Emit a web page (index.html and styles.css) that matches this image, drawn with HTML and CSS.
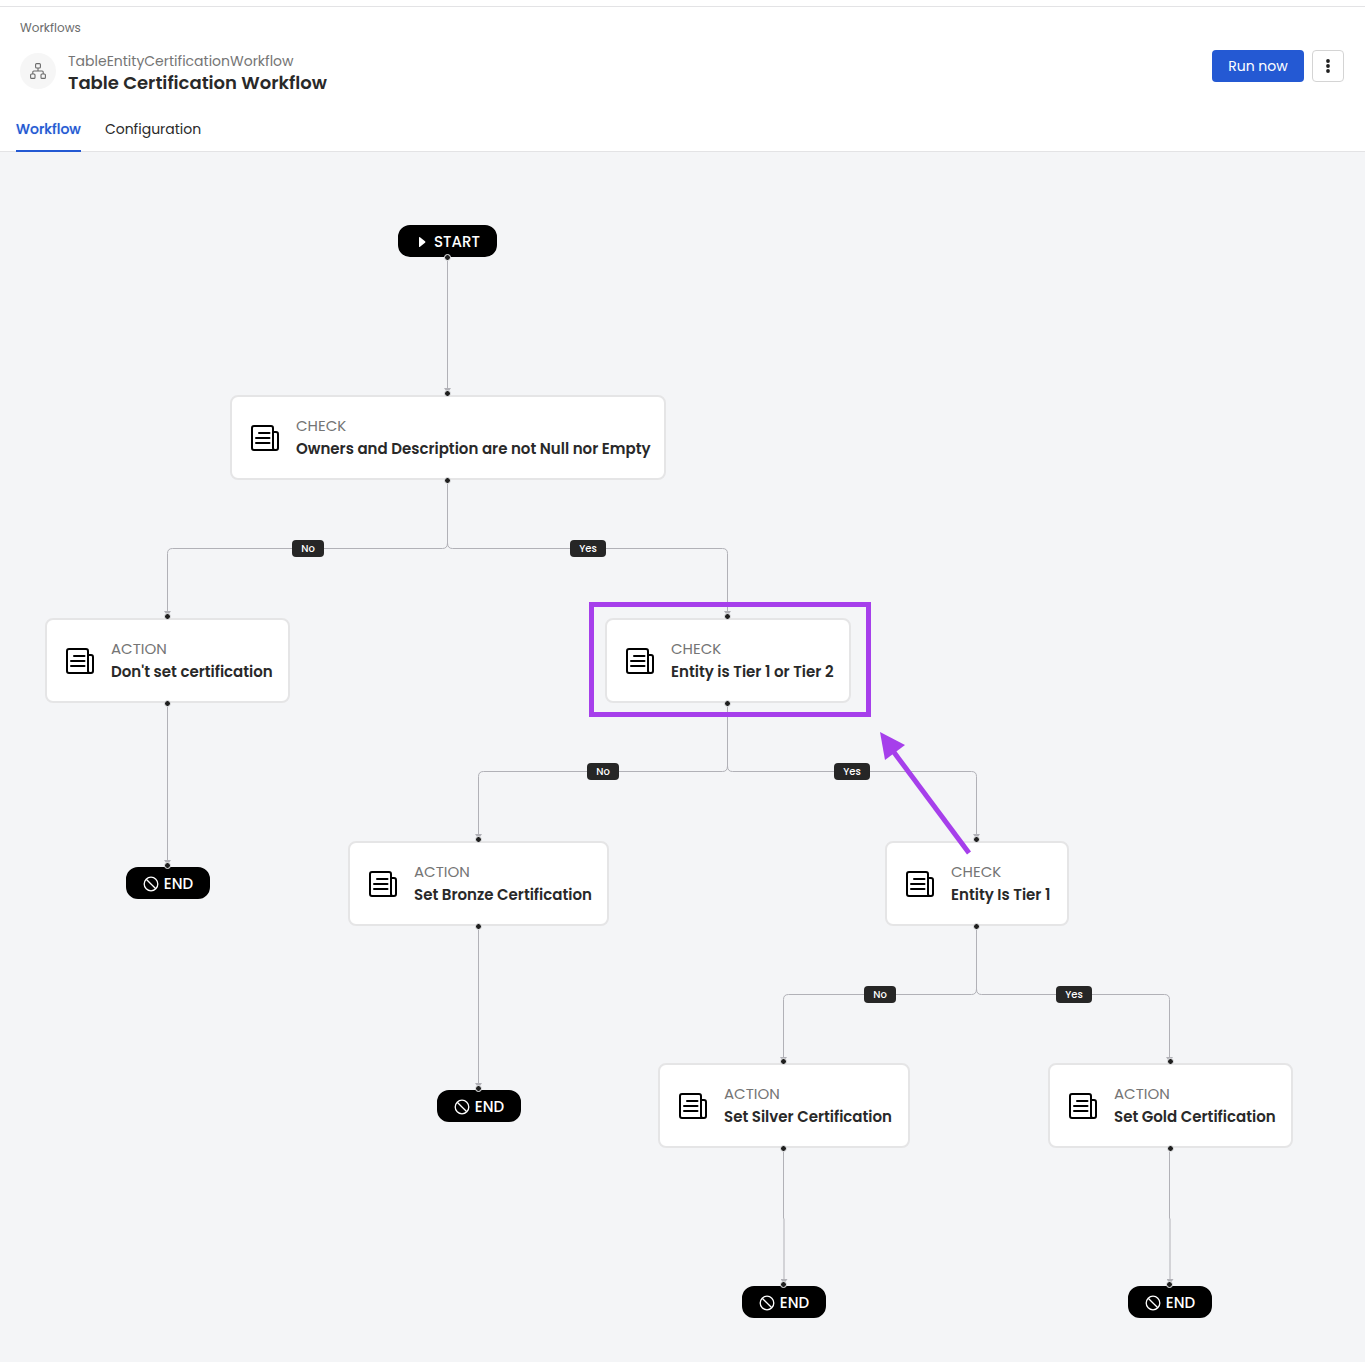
FILE: index.html
```html
<!DOCTYPE html>
<html lang="en">
<head>
<meta charset="utf-8">
<meta name="viewport" content="width=device-width, initial-scale=1">
<title>Table Certification Workflow</title>
<link rel="stylesheet" href="styles.css">
</head>
<body>
<svg class="defs" aria-hidden="true">
  <symbol id="doc" viewBox="0 0 28 26">
    <g fill="none" stroke="#000" stroke-width="2" stroke-linecap="round" stroke-linejoin="round">
      <path d="M25 25H3a2 2 0 0 1-2-2V3a2 2 0 0 1 2-2h17a2 2 0 0 1 2 2v20a2 2 0 0 0 2 2h1a2 2 0 0 0 2-2V9a2 2 0 0 0-2-2h-3"/>
      <path d="M8 8h10.500M5 13h13.500M5 18h13.500"/>
    </g>
  </symbol>
  <symbol id="stop" viewBox="0 0 16 16">
    <g fill="none" stroke="#fff" stroke-width="1.300"><circle cx="8" cy="8" r="6.800"/><path d="M3.200 3.200l9.600 9.600"/></g>
  </symbol>
</svg>
<header class="header">
  <nav class="crumbs" aria-label="Breadcrumb"><a href="#">Workflows</a></nav>
  <div class="heading">
    <span class="avatar">
      <svg width="16" height="16" viewBox="0 0 16 16" fill="none" stroke="#6b6b6b" stroke-width="1.100" aria-hidden="true">
        <rect x="5.600" y=".6" width="4.800" height="4.400" rx="1"/><rect x=".6" y="11" width="4.400" height="4.400" rx="1"/><rect x="11" y="11" width="4.400" height="4.400" rx="1"/><path d="M8 5v3M2.800 11V9a1 1 0 0 1 1-1h8.400a1 1 0 0 1 1 1v2"/>
      </svg>
    </span>
    <div class="names">
      <p class="entity">TableEntityCertificationWorkflow</p>
      <h1 class="title">Table Certification Workflow</h1>
    </div>
    <div class="actions">
      <button class="run" type="button">Run now</button>
      <button class="more" type="button" aria-label="More actions">
        <svg width="4" height="14" viewBox="0 0 4 14" fill="#1f1f1f"><circle cx="2" cy="2" r="1.900"/><circle cx="2" cy="7" r="1.900"/><circle cx="2" cy="12" r="1.900"/></svg>
      </button>
    </div>
  </div>
  <div class="tabs" role="tablist">
    <button class="tab tab-active" type="button" role="tab" aria-selected="true">Workflow</button>
    <button class="tab" type="button" role="tab" aria-selected="false">Configuration</button>
  </div>
</header>
<main class="canvas">
  <svg class="layer edges" aria-hidden="true">
    <defs><marker id="arrow" viewBox="0 0 7 5" markerWidth="7" markerHeight="5" refX="3.500" refY="3" markerUnits="userSpaceOnUse"><path d="M0 0h7L3.500 5z" fill="#b1b1b7"/></marker></defs>
    <g fill="none" stroke="#b1b1b7" marker-end="url(#arrow)">
      <path d="M447.500 106V239"/>
      <path d="M447.500 329V391q0 5.500-5 5.500H172.500q-5 0-5 5V462"/>
      <path d="M447.500 329V391q0 5.500 5 5.500H722.500q5 0 5 5V462"/>
      <path d="M167.500 552V711"/>
      <path d="M727.500 552V614q0 5.500-5 5.500H483.500q-5 0-5 5V685"/>
      <path d="M727.500 552V614q0 5.500 5 5.500H971.500q5 0 5 5V685"/>
      <path d="M478.500 775V934"/>
      <path d="M976.500 775V837q0 5.500-5 5.500H788.500q-5 0-5 5V908"/>
      <path d="M976.500 775V837q0 5.500 5 5.500H1164.500q5 0 5 5V908"/>
      <path d="M783.500 998V1066l.500 1V1130"/>
      <path d="M1169.500 998V1066l.500 1V1130"/>
    </g>
  </svg>

  <div class="pill start"><svg width="8" height="12" viewBox="0 0 8 12" fill="#fff" aria-hidden="true"><path d="M1 1.500Q1 .5 2 1.200L7 5.200Q8 6 7 6.800L2 10.800Q1 11.500 1 10.500z"/></svg>START</div>

  <article class="card owners"><svg class="doc"><use href="#doc"/></svg><div class="label"><p class="kind">CHECK</p><h2 class="name">Owners and Description are not Null nor Empty</h2></div></article>
  <article class="card unset"><svg class="doc"><use href="#doc"/></svg><div class="label"><p class="kind">ACTION</p><h2 class="name">Don't set certification</h2></div></article>
  <article class="card tier-any"><svg class="doc"><use href="#doc"/></svg><div class="label"><p class="kind">CHECK</p><h2 class="name">Entity is Tier 1 or Tier 2</h2></div></article>
  <article class="card bronze"><svg class="doc"><use href="#doc"/></svg><div class="label"><p class="kind">ACTION</p><h2 class="name">Set Bronze Certification</h2></div></article>
  <article class="card tier-one"><svg class="doc"><use href="#doc"/></svg><div class="label"><p class="kind">CHECK</p><h2 class="name">Entity Is Tier 1</h2></div></article>
  <article class="card silver"><svg class="doc"><use href="#doc"/></svg><div class="label"><p class="kind">ACTION</p><h2 class="name">Set Silver Certification</h2></div></article>
  <article class="card gold"><svg class="doc"><use href="#doc"/></svg><div class="label"><p class="kind">ACTION</p><h2 class="name">Set Gold Certification</h2></div></article>

  <div class="pill end end-unset"><svg class="stop"><use href="#stop"/></svg>END</div>
  <div class="pill end end-bronze"><svg class="stop"><use href="#stop"/></svg>END</div>
  <div class="pill end end-silver"><svg class="stop"><use href="#stop"/></svg>END</div>
  <div class="pill end end-gold"><svg class="stop"><use href="#stop"/></svg>END</div>

  <span class="branch no owners-no">No</span>
  <span class="branch yes owners-yes">Yes</span>
  <span class="branch no any-no">No</span>
  <span class="branch yes any-yes">Yes</span>
  <span class="branch no one-no">No</span>
  <span class="branch yes one-yes">Yes</span>

  <div class="highlight"></div>
  <svg class="layer" aria-hidden="true"><path d="M893 599L969 701" stroke="#a63feb" stroke-width="5"/><path d="M880 580l25 13-20 15z" fill="#a63feb"/></svg>
</main>
</body>
</html>
```
FILE: styles.css
```css
*, ::before, ::after { box-sizing: border-box; }

body {
  margin: 0;
  min-height: 100vh;
  display: flex;
  flex-direction: column;
  background: #fff;
  color: #292929;
  font-family: Poppins, Inter, "Open Sans", sans-serif;
  font-size: 14px;
  line-height: 22px;
}

h1, h2, p { margin: 0; }
button { font: inherit; cursor: pointer; }
.defs { position: absolute; width: 0; height: 0; }

.header {
  margin-top: 6px;
  border-top: 1px solid #e3e3e5;
  border-bottom: 1px solid #e3e3e5;
}

.crumbs { padding: 10px 20px 0; font-size: 12px; }
.crumbs a { color: #6b6b6b; text-decoration: none; }

.heading {
  display: flex;
  align-items: flex-start;
  padding: 11px 21px 0 20px;
}

.avatar {
  display: grid;
  place-items: center;
  width: 36px;
  height: 36px;
  margin: 3px 12px 0 0;
  border-radius: 50%;
  background: #f6f6f6;
}

.names { flex: 1; }
.entity { color: #757575; }
.title { font-size: 18px; line-height: 22px; font-weight: 600; }

.actions { display: flex; gap: 8px; }

.run {
  width: 92px;
  height: 32px;
  padding: 0;
  border: 0;
  border-radius: 4px;
  background: #2459d3;
  color: #fff;
}

.more {
  display: grid;
  place-items: center;
  width: 32px;
  height: 32px;
  padding: 0;
  border: 1px solid #d4d4d4;
  border-radius: 4px;
  background: #fff;
}

.tabs { display: flex; gap: 24px; padding: 12px 16px 0; }

.tab {
  height: 46px;
  margin-bottom: -1px;
  padding: 2px 0 0;
  border: 0;
  border-bottom: 2px solid transparent;
  background: none;
  color: #292929;
}

.tab-active {
  border-color: #2459d3;
  color: #2459d3;
  font-weight: 500;
  text-shadow: 0 0 1px #2459d366;
}

.canvas {
  position: relative;
  flex: 1;
  min-height: 1210px;
  background: #f4f5f7;
}

.layer {
  position: absolute;
  inset: 0;
  width: 100%;
  height: 100%;
  overflow: visible;
  pointer-events: none;
}

.card, .pill {
  position: absolute;
  display: flex;
  align-items: center;
  white-space: nowrap;
  font-size: 15px;
}

.card {
  height: 85px;
  gap: 17px;
  padding: 0 19px;
  border: 2px solid #e5e5e6;
  border-radius: 8px;
  background: #fff;
}

.doc { flex: none; width: 28px; height: 26px; }
.label { padding-bottom: 1px; }
.kind { color: #757575; line-height: 24px; }
.name { font-size: 15px; line-height: 22px; font-weight: 600; }

.pill {
  width: 84px;
  height: 32px;
  gap: 5px;
  justify-content: center;
  padding-top: 1px;
  border: 2px solid #000;
  border-radius: 12px;
  background: #000;
  color: #fff;
  font-weight: 500;
}

.stop { width: 16px; height: 16px; }

/* connection handles */
.card::before, .card::after, .start::after, .end::before {
  content: "";
  position: absolute;
  left: 50%;
  width: 7px;
  height: 7px;
  margin-left: -4px;
  border: 1px solid #f4f5f7;
  border-radius: 50%;
  background: #1f1f1f;
}

.card::before, .end::before { top: -7px; }
.card::after, .start::after { bottom: -6px; }

.start { left: 398px; top: 73px; width: 99px; gap: 8px; padding-left: 3px; }
.owners { left: 230px; top: 243px; width: 436px; }
.unset { left: 45px; top: 466px; width: 245px; }
.tier-any { left: 605px; top: 466px; width: 246px; }
.bronze { left: 348px; top: 689px; width: 261px; }
.tier-one { left: 885px; top: 689px; width: 184px; }
.silver { left: 658px; top: 911px; width: 252px; }
.gold { left: 1048px; top: 911px; width: 245px; }

.end-unset { left: 126px; top: 715px; }
.end-bronze { left: 437px; top: 938px; }
.end-silver { left: 742px; top: 1134px; }
.end-gold { left: 1128px; top: 1134px; }

.branch {
  position: absolute;
  height: 17px;
  border-radius: 4px;
  background: #262626;
  color: #fff;
  font-size: 10px;
  line-height: 17px;
  font-weight: 500;
  text-align: center;
}

.no { width: 32px; }
.yes { width: 36px; }
.owners-no { left: 292px; top: 388px; }
.owners-yes { left: 570px; top: 388px; }
.any-no { left: 587px; top: 611px; }
.any-yes { left: 834px; top: 611px; }
.one-no { left: 864px; top: 834px; }
.one-yes { left: 1056px; top: 834px; }

.highlight {
  position: absolute;
  left: 589px;
  top: 450px;
  width: 282px;
  height: 115px;
  border: 5px solid #a63feb;
}
```
